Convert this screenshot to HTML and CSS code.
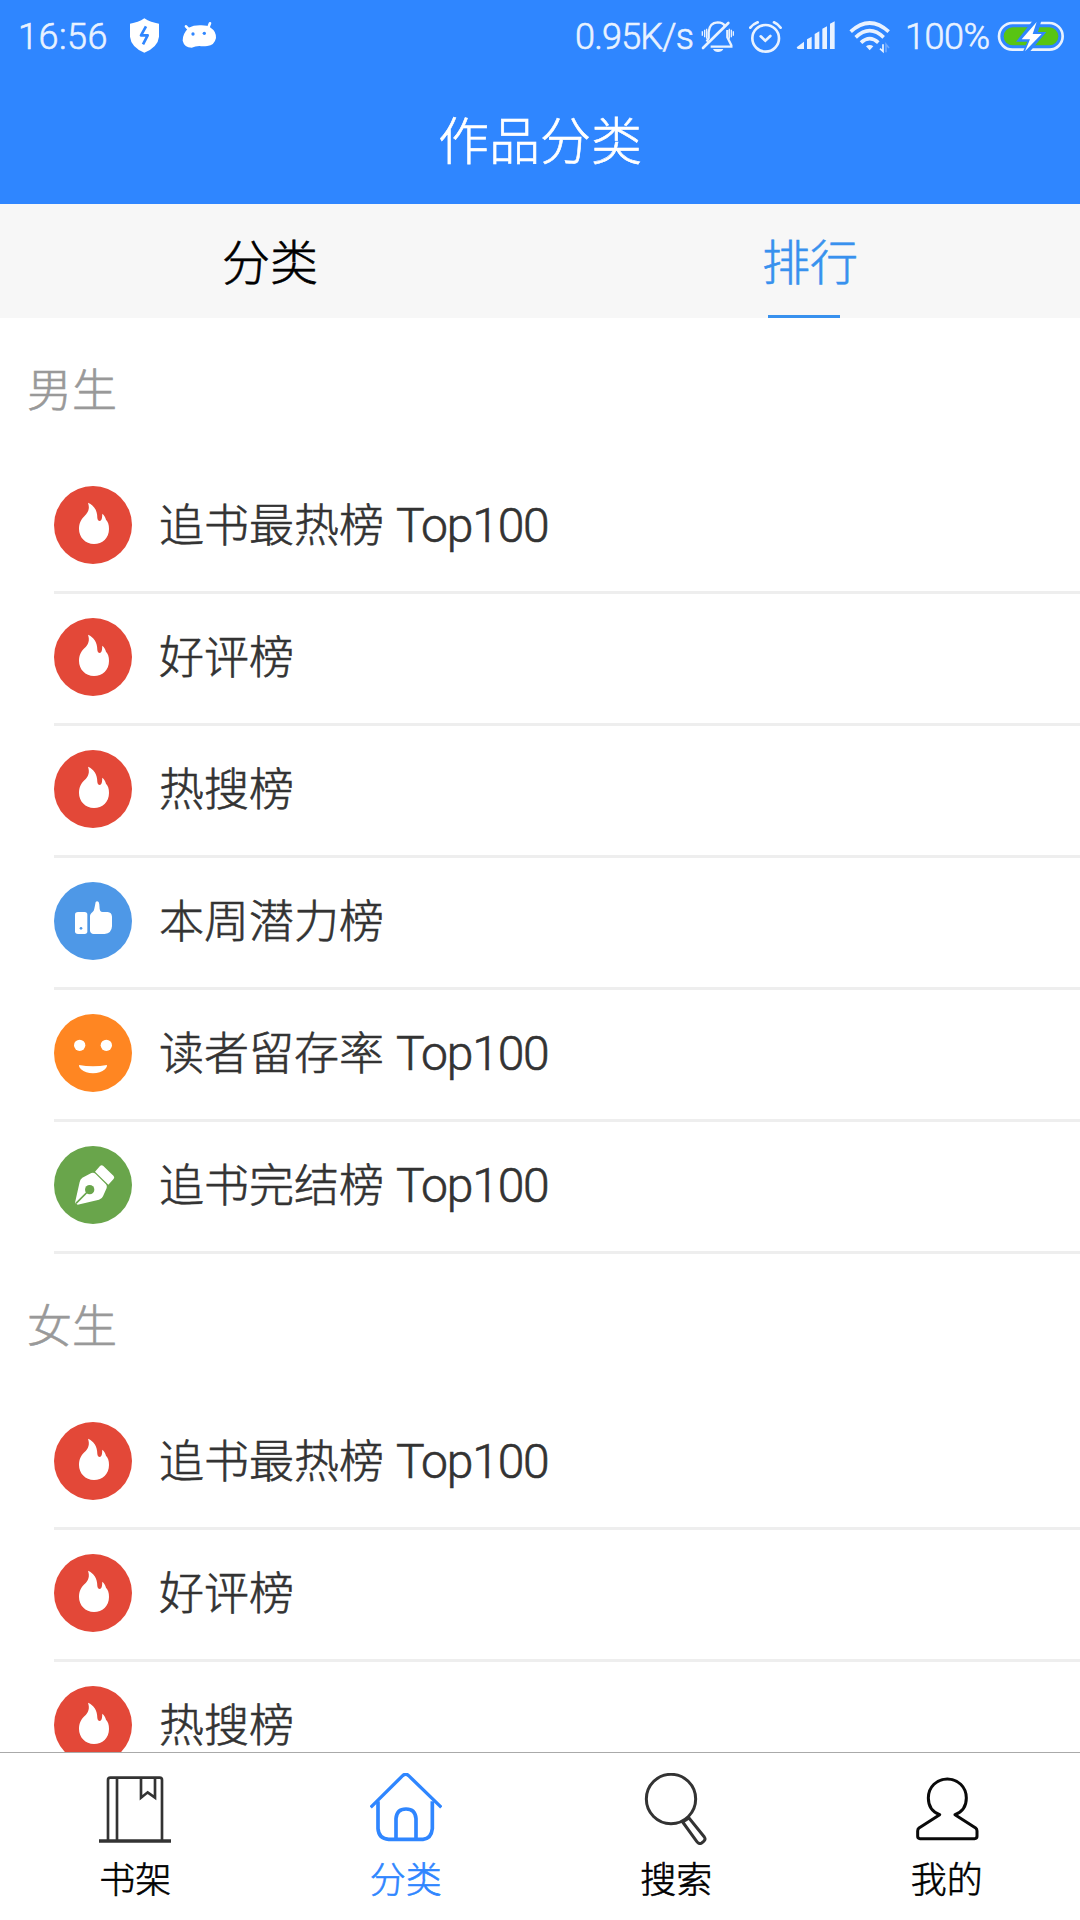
FILE: index.html
```html
<!DOCTYPE html>
<html lang="zh-CN">
<head>
  <meta charset="UTF-8" />
  <meta name="viewport" content="width=device-width, initial-scale=1.0"/>
  <title>作品分类</title>
  <link rel="stylesheet" href="styles.css">
</head>
<body>

  <!-- Rank icons -->
  <svg class="sprite">
    <symbol id="fire" viewBox="42 48 234 234">
      <circle cx="159" cy="165" r="117" fill="#e34838"/>
      <path fill="#fff" d="M144 98C162 106 172 121 172 144C173 155 183 155 185 147C187 142 186 137 187 131C193 136 196 141 198 149C204 155 207 164 207 177C207 204 187 222 162 222C136 222 117 202 117 177C117 160 123 149 133 139C145 127 150 116 144 98Z"/>
    </symbol>
    <symbol id="thumb" viewBox="42 66 234 234">
      <circle cx="159" cy="183" r="117" fill="#4e98e7"/>
      <path fill="#fff" d="M114 156H134Q142 156 142 164V214Q142 222 134 222H114Q105 222 105 214V164Q105 156 114 156Z"/>
      <circle cx="123" cy="205" r="4" fill="#4e98e7"/>
      <path fill="#fff" d="M150 167C151 160 157 157 161 152C164 146 165 134 167 126Q171 121 176 126C180 135 177 145 181 153Q183 156 188 156H203Q215 157 216 170V199Q215 220 194 222H161Q151 221 150 212Z"/>
    </symbol>
    <symbol id="smile" viewBox="42 462 234 234">
      <circle cx="159" cy="579" r="117" fill="#ff8622"/>
      <circle cx="119" cy="556" r="17" fill="#fff"/>
      <circle cx="199" cy="556" r="17" fill="#fff"/>
      <path fill="#fff" d="M117 615Q159 623 201 615Q202 623 195 628Q181 640 159 640Q137 640 123 628Q116 623 117 615Z"/>
    </symbol>
    <symbol id="pen" viewBox="42 858 234 234">
      <circle cx="159" cy="975" r="117" fill="#69a54b"/>
      <path fill="#fff" d="M105 1028L119 966Q120 958 127 953L154 939Q161 936 167 942L198 973Q202 978 200 984L189 1009Q186 1017 177 1019L113 1034Z"/>
      <path fill="#fff" d="M165 935L180 918Q185 913 190 918L221 948Q225 953 220 958L205 974Z"/>
      <circle cx="149" cy="989" r="14" fill="#69a54b"/>
      <path stroke="#69a54b" stroke-width="5" d="M148 990L108 1030"/>
    </symbol>
  </svg>

  <header class="header">
    <div class="status">
      <span class="time">16:56</span>
      <svg class="shield" viewBox="387 45 93 120">
        <path fill="#fff" d="M433 55Q452 68 477 71V110Q474 141 433 158Q393 141 390 110V71Q415 68 433 55Z"/>
        <path fill="none" stroke="#2f86ff" stroke-width="8" stroke-linejoin="round" d="M438 79L423 106H443L429 133"/>
      </svg>
      <svg class="robot" viewBox="543 45 108 120">
        <path fill="#fff" d="M566 83Q582 75 604 76Q622 76 632 83Q649 94 648 114Q643 137 622 138Q609 140 598 138Q586 139 575 143Q553 143 548 122Q547 102 566 83Z"/>
        <path fill="none" stroke="#fff" stroke-width="8" stroke-linecap="round" d="M558 79L567 89M630 70L624 85"/>
        <circle cx="579" cy="102" r="5" fill="#2f86ff"/>
        <circle cx="613" cy="100" r="5" fill="#2f86ff"/>
      </svg>
      <span class="speed">0.95K/s</span>
      <svg class="mute" viewBox="420 45 105 120" fill="none" stroke="#e9f2ff" stroke-width="7">
        <path d="M440 125L446 114V96Q448 68 473 67Q488 67 495 78M502 90V112L514 136V140H452"/>
        <path stroke-width="8" stroke-linecap="round" d="M429 144L505 69"/>
        <path stroke-width="4" d="M427 94V107M434 89V112M440 86V116M508 86V116M514 89V112M520 94V107"/>
        <path fill="#e9f2ff" stroke="none" d="M459 147H490Q486 156 474 156Q463 156 459 147Z"/>
      </svg>
      <svg class="alarm" viewBox="564 45 105 120" fill="none" stroke="#e9f2ff" stroke-width="8" stroke-linecap="round">
        <circle cx="617" cy="115" r="40"/>
        <path d="M602 109L616 122L631 108M571 83Q580 72 593 67M642 67Q654 72 662 83"/>
      </svg>
      <svg class="signal" viewBox="708 45 120 120" fill="#e9f2ff">
        <path d="M710 142L732 125V147H713ZM741 118L755 110V147H741ZM764 102L778 94V147H764ZM787 86L801 79V147H787ZM810 71L824 64V147H810Z"/>
      </svg>
      <svg class="wifi" viewBox="87 45 126 120" fill="none" stroke="#e9f2ff" stroke-width="11">
        <path d="M92 95Q149 43 206 95M107 112Q149 72 191 112M123 128Q149 104 175 128"/>
        <path fill="#e9f2ff" stroke="none" d="M138 139Q149 131 160 139L149 151Z"/>
        <path stroke-width="5" d="M189 133V154L180 146"/>
        <path stroke-width="5" stroke="#6ca8ff" d="M198 157V133L207 144"/>
      </svg>
      <span class="percent">100%</span>
      <svg class="battery" viewBox="531 45 204 120">
        <rect x="537" y="69" width="191" height="80" rx="40" fill="none" stroke="#e9f2ff" stroke-width="8"/>
        <rect x="551" y="82" width="164" height="54" rx="27" fill="#58c413"/>
        <path fill="#2f86ff" d="M638 62H664L654 96H679L628 157H608L622 125H588Z"/>
        <path fill="#fff" d="M650 66L605 118H630L615 154L665 102H638Z"/>
      </svg>
    </div>
    <h1 class="title">作品分类</h1>
  </header>

  <nav class="tabs">
    <div class="tab">分类</div>
    <div class="tab active">排行</div>
  </nav>

  <main class="content">
    <h2 class="group">男生</h2>
    <ul class="ranks">
      <li class="rank"><svg class="icon"><use href="#fire"/></svg><span>追书最热榜 <span class="latin">Top100</span></span></li>
      <li class="rank"><svg class="icon"><use href="#fire"/></svg><span>好评榜</span></li>
      <li class="rank"><svg class="icon"><use href="#fire"/></svg><span>热搜榜</span></li>
      <li class="rank"><svg class="icon"><use href="#thumb"/></svg><span>本周潜力榜</span></li>
      <li class="rank"><svg class="icon"><use href="#smile"/></svg><span>读者留存率 <span class="latin">Top100</span></span></li>
      <li class="rank"><svg class="icon"><use href="#pen"/></svg><span>追书完结榜 <span class="latin">Top100</span></span></li>
    </ul>

    <h2 class="group">女生</h2>
    <ul class="ranks">
      <li class="rank"><svg class="icon"><use href="#fire"/></svg><span>追书最热榜 <span class="latin">Top100</span></span></li>
      <li class="rank"><svg class="icon"><use href="#fire"/></svg><span>好评榜</span></li>
      <li class="rank"><svg class="icon"><use href="#fire"/></svg><span>热搜榜</span></li>
    </ul>
  </main>

  <!-- Bottom navigation -->
  <nav class="bottom">
    <div class="item">
      <svg viewBox="177 219 216 216" fill="none" stroke="#333" stroke-width="8">
        <path d="M204 420V240Q204 233 211 233H359Q366 233 366 240V420M231 233V420M303 233V293L323 277L345 293V233"/>
        <path stroke-width="10" d="M177 423H393"/>
      </svg>
      <span>书架</span>
    </div>
    <div class="item active">
      <svg viewBox="990 219 216 216" fill="none" stroke="#2f86ff" stroke-width="11">
        <path stroke-width="10" d="M992 322L1088 227Q1097 219 1106 227L1204 322"/>
        <path d="M1014 304V386Q1016 416 1046 418H1149Q1174 416 1177 386V304M1068 418V356Q1070 327 1098 327Q1126 327 1128 356V418"/>
      </svg>
      <span>分类</span>
    </div>
    <div class="item">
      <svg viewBox="121 219 216 216" fill="none" stroke="#333" stroke-width="9">
        <circle cx="214" cy="297" r="74"/>
        <path d="M249 366L291 424Q298 434 306 429L312 424Q319 418 314 411L268 354Z"/>
      </svg>
      <span>搜索</span>
    </div>
    <div class="item">
      <svg viewBox="932 219 216 216" fill="none" stroke="#0a0a0a" stroke-width="9" stroke-linejoin="round">
        <path d="M1018 344C994 335 984 318 984 294C984 260 1010 237 1041 237C1072 237 1098 260 1098 294C1098 318 1088 335 1064 344L1126 384Q1130 387 1130 393V409Q1130 416 1123 416H959Q952 416 952 409V393Q952 387 956 384Z"/>
      </svg>
      <span>我的</span>
    </div>
  </nav>

</body>
</html>
```
FILE: styles.css
```css
* {
  box-sizing: border-box;
}

body {
  display: flex;
  flex-direction: column;
  height: 1920px;
  margin: 0;
  overflow: hidden;
  background: #fff;
  color: #333;
  font-family: "Noto Sans CJK SC", sans-serif;
  font-weight: 300;
  -webkit-text-stroke: 0.6px;
}

.sprite {
  display: none;
}

h1, h2, ul {
  margin: 0;
  padding: 0;
  font-weight: 300;
}

/* Header */
.header {
  flex: none;
  height: 204px;
  background: #2f86ff;
  color: #fff;
}

.status {
  display: flex;
  align-items: center;
  height: 74px;
  padding-left: 18px;
  color: #e9f2ff;
  font-family: Roboto, sans-serif;
  font-size: 36px;
  line-height: 76px;
  white-space: nowrap;
}

.status svg {
  flex: none;
  height: 40px;
  margin-bottom: 4px;
}

.time {
  width: 111px;
  letter-spacing: 0.5px;
}

.shield {
  width: 31px;
}

.robot {
  width: 36px;
  margin-left: 21px;
}

.speed {
  width: 125px;
  margin-left: 358px;
  letter-spacing: -0.8px;
}

.mute {
  width: 35px;
}

.alarm {
  width: 35px;
  margin-left: 13px;
}

.signal {
  width: 40px;
  margin-left: 13px;
}

.wifi {
  width: 42px;
  margin-left: 13px;
}

.percent {
  width: 92px;
  margin-left: 14px;
  letter-spacing: -0.5px;
}

.battery {
  width: 68px;
}

.title {
  height: 130px;
  font-size: 51px;
  line-height: 128px;
  text-align: center;
}

/* Tabs */
.tabs {
  display: flex;
  flex: none;
  height: 114px;
  background: #f7f7f7;
}

.tab {
  display: flex;
  flex: 1;
  flex-direction: column;
  align-items: center;
  color: #000;
  font-size: 48px;
  line-height: 111px;
}

.tab.active {
  color: #3891ee;
}

.tab.active::after {
  content: "";
  width: 72px;
  height: 3px;
  margin-right: 12px;
  background: #3891ee;
}

/* Rank list */
.content {
  flex: 1;
  min-height: 0;
  overflow: hidden;
}

.group {
  height: 144px;
  padding-left: 27px;
  color: #999;
  font-size: 45px;
  line-height: 139px;
}

.ranks {
  padding-left: 54px;
  list-style: none;
}

.rank {
  display: flex;
  gap: 27px;
  height: 132px;
  padding-top: 24px;
  border-bottom: 3px solid #eee;
  font-size: 45px;
  line-height: 73px;
}

.icon {
  width: 78px;
  height: 78px;
}

.latin {
  margin-left: 2px;
  font-family: Roboto, sans-serif;
  font-size: 48px;
  letter-spacing: -1.2px;
}

/* Bottom navigation */
.bottom {
  display: flex;
  flex: none;
  height: 168px;
  margin-right: -2px;
  border-top: 1px solid #aaa;
}

.item {
  display: flex;
  flex: 1;
  flex-direction: column;
  align-items: center;
  padding-top: 20px;
  color: #000;
  font-size: 36px;
  line-height: 65px;
}

.item.active {
  color: #2f86ff;
}

.item svg {
  width: 72px;
  height: 72px;
}
```
